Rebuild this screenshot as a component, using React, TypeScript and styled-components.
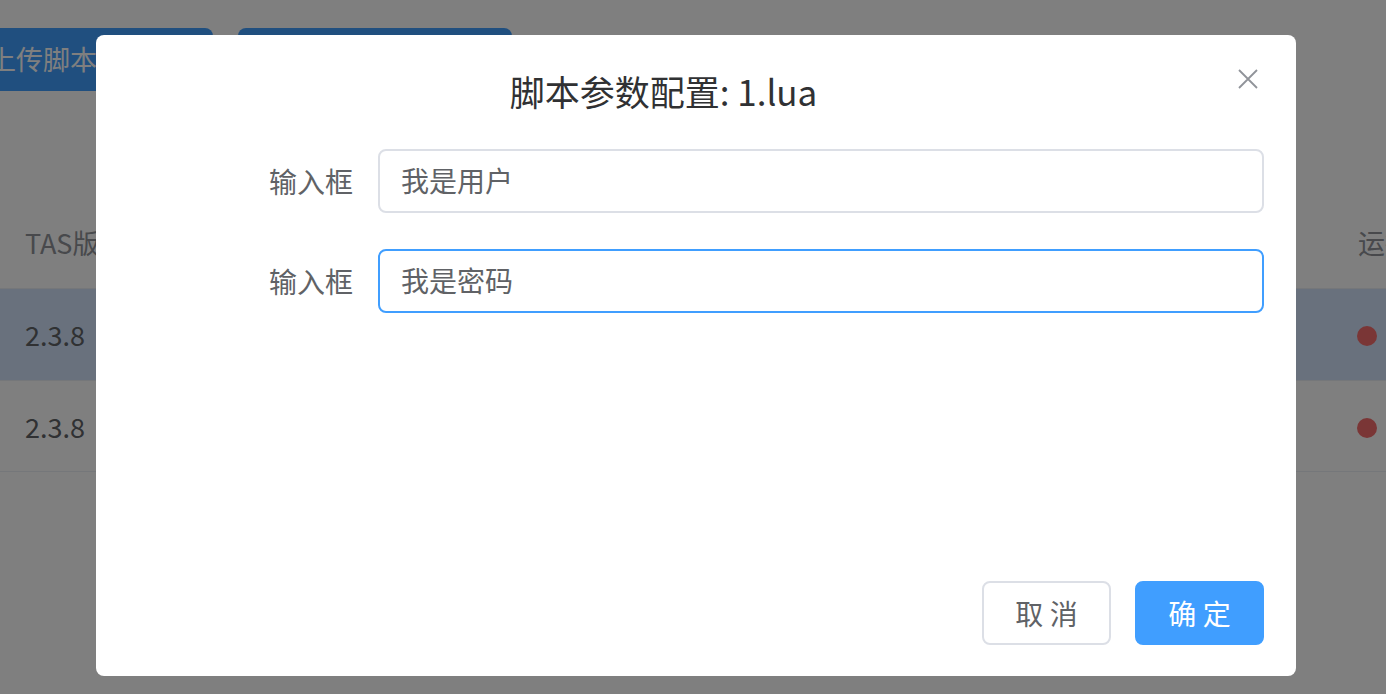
import React from "react";
import styled, { createGlobalStyle } from "styled-components";

const GlobalStyle = createGlobalStyle`
  html, body {
    margin: 0;
    padding: 0;
    width: 100%;
    height: 100%;
    overflow: hidden;
    background: #ffffff;
    font-family: "Noto Sans CJK SC", "Noto Sans", "Liberation Sans", sans-serif;
  }
  * { box-sizing: border-box; }
`;

const Page = styled.div`
  position: relative;
  width: 1386px;
  height: 694px;
  overflow: hidden;
  background: #ffffff;
`;

const Toolbar = styled.div`
  display: flex;
  gap: 25px;
  padding-top: 28px;
  margin-left: -52px;
`;

const PageButton = styled.div<{ $w: number }>`
  width: ${(p) => p.$w}px;
  height: 63px;
  border-radius: 8px;
  background: #409eff;
  color: #ffffff;
  font-size: 27px;
  line-height: 62px;
  padding-left: 41px;
  white-space: nowrap;
  overflow: hidden;
`;

const Table = styled.div`
  margin-top: 106px;
  width: 1700px;
`;

const Row = styled.div<{ $bg?: string; $h: number }>`
  display: grid;
  grid-template-columns: 1333px 300px;
  align-items: center;
  height: ${(p) => p.$h}px;
  padding-left: 25px;
  background: ${(p) => p.$bg || "#ffffff"};
  border-bottom: 1px solid #ebeef5;
`;

const HeadCell = styled.div`
  font-size: 27px;
  color: #909399;
  white-space: nowrap;
`;

const Cell = styled.div`
  font-size: 27px;
  color: #606266;
  white-space: nowrap;
`;

const Dot = styled.span`
  display: inline-block;
  width: 20px;
  height: 20px;
  border-radius: 50%;
  background: #f56c6c;
  margin-left: -1px;
`;

const Overlay = styled.div`
  position: absolute;
  inset: 0;
  background: rgba(0, 0, 0, 0.5);
  padding: 35px 0 0 96px;
`;

const Dialog = styled.div`
  position: relative;
  width: 1200px;
  height: 641px;
  background: #ffffff;
  border-radius: 8px;
  display: flex;
  flex-direction: column;
`;

const Header = styled.div`
  padding: 31px 97px 0 32px;
`;

const Title = styled.div`
  text-align: center;
  font-size: 35px;
  line-height: 50px;
  color: #303133;
`;

const CloseButton = styled.button`
  position: absolute;
  top: 33px;
  right: 37px;
  width: 22px;
  height: 22px;
  padding: 0;
  border: none;
  background: transparent;
  display: flex;
  align-items: center;
  justify-content: center;
  cursor: pointer;
`;

const Body = styled.div`
  flex: 1;
  padding: 33px 32px 0 0;
  display: flex;
  flex-direction: column;
  gap: 36px;
`;

const FormRow = styled.div`
  display: flex;
  align-items: center;
`;

const Label = styled.label`
  width: 282px;
  padding-right: 25px;
  text-align: right;
  font-size: 28px;
  color: #606266;
  flex-shrink: 0;
`;

const Input = styled.div<{ $focus?: boolean }>`
  flex: 1;
  height: 64px;
  border: 2px solid ${(p) => (p.$focus ? "#409eff" : "#dcdfe6")};
  border-radius: 8px;
  padding-left: 21px;
  font-size: 28px;
  line-height: 58px;
  color: #606266;
`;

const Footer = styled.div`
  display: flex;
  justify-content: flex-end;
  gap: 24px;
  padding: 0 32px 31px;
`;

const DialogButton = styled.button<{ $primary?: boolean }>`
  width: 129px;
  height: 64px;
  border-radius: 8px;
  font-family: inherit;
  font-size: 28px;
  border: 2px solid ${(p) => (p.$primary ? "#409eff" : "#dcdfe6")};
  background: ${(p) => (p.$primary ? "#409eff" : "#ffffff")};
  color: ${(p) => (p.$primary ? "#ffffff" : "#606266")};
  cursor: pointer;
`;

export default function App() {
  return (
    <>
      <GlobalStyle />
      <Page>
        <Toolbar>
          <PageButton $w={265}>上传脚本</PageButton>
          <PageButton $w={274}>下载脚本模板文件</PageButton>
        </Toolbar>
        <Table>
          <Row $h={92}>
            <HeadCell>TAS版本</HeadCell>
            <HeadCell>运行状态</HeadCell>
          </Row>
          <Row $h={92} $bg="#d2e2fa">
            <Cell>2.3.8</Cell>
            <Cell>
              <Dot />
            </Cell>
          </Row>
          <Row $h={91}>
            <Cell>2.3.8</Cell>
            <Cell>
              <Dot />
            </Cell>
          </Row>
        </Table>
        <Overlay>
          <Dialog>
            <Header>
              <Title>脚本参数配置: 1.lua</Title>
            </Header>
            <CloseButton aria-label="关闭">
              <svg width="22" height="22" viewBox="0 0 22 22">
                <path d="M2 2 L20 20 M20 2 L2 20" stroke="#909399" strokeWidth="1.8" fill="none" />
              </svg>
            </CloseButton>
            <Body>
              <FormRow>
                <Label>输入框</Label>
                <Input>我是用户</Input>
              </FormRow>
              <FormRow>
                <Label>输入框</Label>
                <Input $focus>我是密码</Input>
              </FormRow>
            </Body>
            <Footer>
              <DialogButton>取 消</DialogButton>
              <DialogButton $primary>确 定</DialogButton>
            </Footer>
          </Dialog>
        </Overlay>
      </Page>
    </>
  );
}
